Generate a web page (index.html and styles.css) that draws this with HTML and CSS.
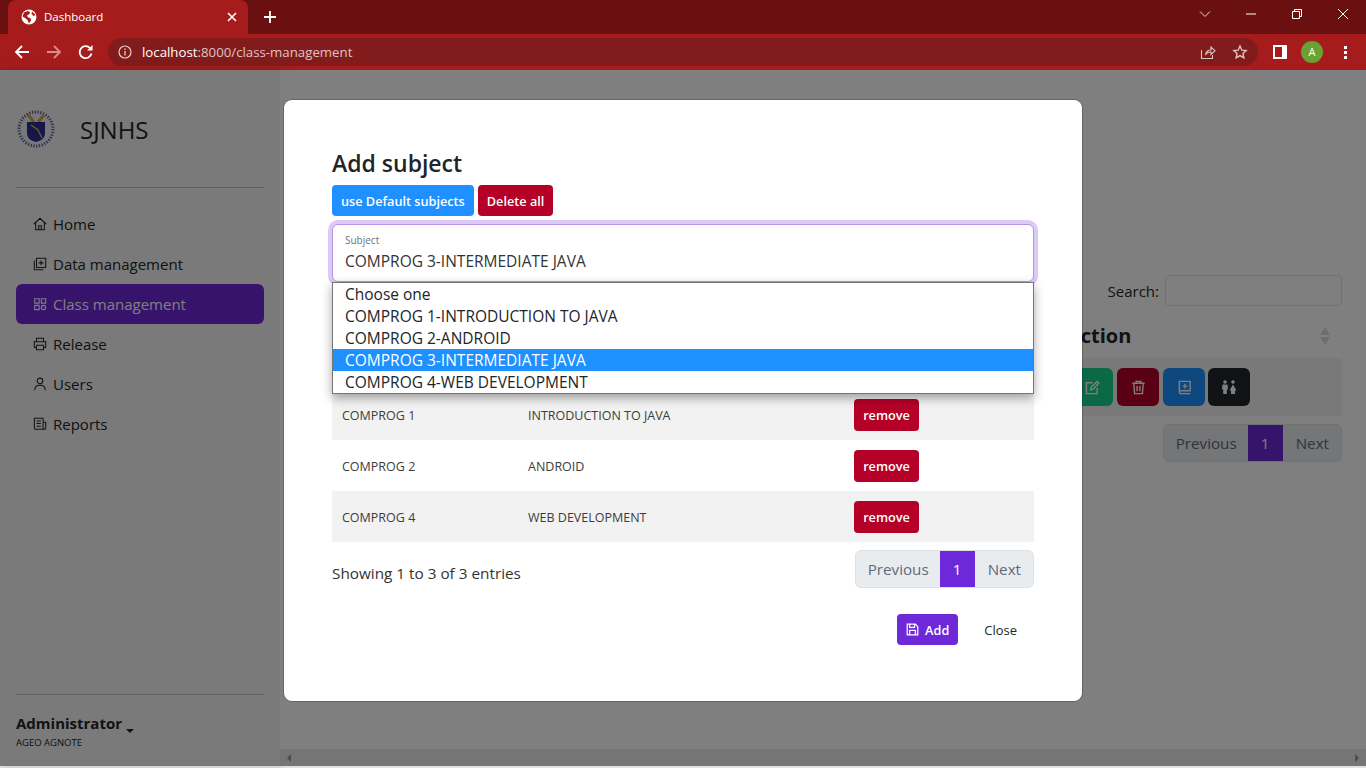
FILE: index.html
```html
<!DOCTYPE html>
<html lang="en">
<head>
    <meta charset="UTF-8">
    <meta name="viewport" content="width=device-width, initial-scale=1.0">
    <title>Dashboard</title>
    <link rel="stylesheet" href="styles.css">
</head>
<body>

    <!-- Browser chrome -->
    <div class="tabstrip">
        <div class="tab">
            <svg class="favicon" viewBox="0 0 16 16" width="16" height="16"><circle cx="8" cy="8" r="7.5" fill="#fff"/><path d="M3 3.5 6.5 2 9 3 8.5 5 6 6.5 7 8.5 9.5 9 10 11.500 8 14.500 6.500 11 4 9 1.500 7.500z M11 2.500 14.500 6 12.500 7 10.500 5z" fill="#a61c1c"/></svg>
            <span class="tab-title">Dashboard</span>
            <svg class="tab-close" viewBox="0 0 10 10" width="10" height="10"><path d="M1 1 9 9M9 1 1 9" stroke="#fff" stroke-width="1.600"/></svg>
        </div>
        <svg class="new-tab" viewBox="0 0 12 12" width="12" height="12"><path d="M6 0V12M0 6H12" stroke="#fff" stroke-width="1.800"/></svg>
        <div class="window-controls">
            <svg viewBox="0 0 12 12" width="12" height="12"><path d="M1 3.500 6 8.500 11 3.500" fill="none" stroke="#e6d3d3"/></svg>
            <svg viewBox="0 0 12 12" width="12" height="12"><path d="M1 6H11" stroke="#fff"/></svg>
            <svg viewBox="0 0 12 12" width="12" height="12"><path d="M1.500 3.500H8.500V10.500H1.500z M3.500 3.500V1.500H10.500V8.500H8.500" fill="none" stroke="#fff"/></svg>
            <svg viewBox="0 0 12 12" width="12" height="12"><path d="M1 1 11 11M11 1 1 11" stroke="#fff"/></svg>
        </div>
    </div>
    <div class="toolbar">
        <svg class="nav-btn" viewBox="0 0 16 16" width="16" height="16"><path d="M15 8H2M8 2 2 8 8 14" fill="none" stroke="#fff" stroke-width="1.800"/></svg>
        <svg class="nav-btn" viewBox="0 0 16 16" width="16" height="16"><path d="M1 8H14M8 2 14 8 8 14" fill="none" stroke="#d98a8a" stroke-width="1.800"/></svg>
        <svg class="nav-btn" viewBox="0 0 16 16" width="16" height="16"><path d="M13.500 9.500A6 6 0 1 1 12 4" fill="none" stroke="#fff" stroke-width="1.800"/><path d="M14.500 1V6.500H9z" fill="#fff"/></svg>
        <div class="omnibox">
            <svg viewBox="0 0 14 14" width="14" height="14"><circle cx="7" cy="7" r="6" fill="none" stroke="#e3cfcf" stroke-width="1.200"/><path d="M7 6V10.500M7 3.500V5" stroke="#e3cfcf" stroke-width="1.300"/></svg>
            <span class="url"><span class="url-host">localhost</span>:8000/class-management</span>
            <svg class="omni-share" viewBox="0 0 16 16" width="16" height="16"><path d="M1.500 6V14.500H12.500V11M5.500 11C6 7.500 8.500 6 11 6V3L15 6.700 11 10.500V8C8.500 8 6.500 9 5.500 11z" fill="none" stroke="#dcc4c4" stroke-width="1.100"/></svg>
            <svg class="omni-star" viewBox="0 0 16 16" width="16" height="16"><path d="M8 2 9.800 6.200 14.200 6.600 10.900 9.500 11.900 13.900 8 11.600 4.100 13.900 5.100 9.500 1.800 6.600 6.200 6.200z" fill="none" stroke="#e0c8c8" stroke-width="1.300"/></svg>
        </div>
        <div class="side-panel-btn"><span></span></div>
        <div class="avatar">A</div>
        <div class="menu-dots"><span></span><span></span><span></span></div>
    </div>

    <div class="page">
        <!-- Sidebar -->
        <div class="sidebar">
            <div class="brand">
                <svg class="emblem" viewBox="0 0 40 40" width="40" height="40">
                    <circle cx="20" cy="20" r="19" fill="#f0f0f4"/>
                    <circle cx="20" cy="20" r="17" fill="none" stroke="#5a5a9a" stroke-width="3" stroke-dasharray="1.200 1.600"/>
                    <path d="M12 6 18 13M28 6 22 13" stroke="#d4a93a" stroke-width="3"/>
                    <path d="M11 13H29V24C29 30 24 32 20 33 16 32 11 30 11 24z" fill="#2c2c96"/>
                    <path d="M15 16 22 21 26 29" fill="none" stroke="#d8c24a" stroke-width="1.300"/>
                </svg>
                <span class="brand-name">SJNHS</span>
            </div>
            <hr class="side-line">
            <ul class="side-nav">
                <li><svg viewBox="0 0 16 16" width="14" height="14"><path d="M1 8 8 1.500 15 8M3 6.500V14.500H13V6.500M6.500 14.500V10H9.500V14.500" fill="none" stroke="currentColor" stroke-width="1.200"/></svg>Home</li>
                <li><svg viewBox="0 0 16 16" width="14" height="14"><path d="M4 1.500H14.500V12H4zM1.500 4V14.500H12M9.200 4V9.500M6.500 6.700H12" fill="none" stroke="currentColor" stroke-width="1.200"/></svg>Data management</li>
                <li class="active"><svg viewBox="0 0 16 16" width="14" height="14"><path d="M2 2H7V7H2zM9.500 2H14.500V7H9.500zM2 9.500H7V14.500H2z" fill="none" stroke="currentColor" stroke-width="1.300"/><circle cx="12" cy="12" r="2.500" fill="none" stroke="currentColor" stroke-width="1.300"/></svg>Class management</li>
                <li><svg viewBox="0 0 16 16" width="14" height="14"><path d="M4 5V1.500H12V5M4 12H1.500V5.500H14.500V12H12M4 9.500H12V14.500H4z" fill="none" stroke="currentColor" stroke-width="1.200"/></svg>Release</li>
                <li><svg viewBox="0 0 16 16" width="14" height="14"><circle cx="8" cy="4.500" r="3.200" fill="none" stroke="currentColor" stroke-width="1.200"/><path d="M2 15C2 11 5 9.500 8 9.500S14 11 14 15" fill="none" stroke="currentColor" stroke-width="1.200"/></svg>Users</li>
                <li><svg viewBox="0 0 16 16" width="14" height="14"><path d="M1.500 1.500H11.500V14H3C2 14 1.500 13.500 1.500 12.500zM11.500 6H14.500V12.500C14.500 13.500 14 14 13 14H11.500M4 4.500H9M4 7.500H9M4 10.500H9" fill="none" stroke="currentColor" stroke-width="1.200"/></svg>Reports</li>
            </ul>
            <div class="side-user">
                <hr class="side-line">
                <div class="user-role">Administrator<span class="caret"></span></div>
                <div class="user-name">AGEO AGNOTE</div>
            </div>
        </div>

        <!-- Page behind the modal -->
        <div class="main">
            <div class="content">
                <div class="search-row">
                    <label for="search">Search:</label>
                    <input type="text" id="search">
                </div>
                <div class="list-head">
                    <span>Action</span>
                    <svg viewBox="0 0 12 20" width="12" height="20"><path d="M6 1 11 9H1zM6 19 1 11H11z" fill="#dcdcdc"/></svg>
                </div>
                <div class="list-row">
                    <div class="action-btns">
                        <button class="act act-green"><svg viewBox="0 0 16 16" width="15" height="15"><path d="M13 8.500V14.500H1.500V3H8M6 10.500 6.700 7.500 13 1.500 14.800 3.300 8.800 9.800z" fill="none" stroke="#fff" stroke-width="1.500"/></svg></button>
                        <button class="act act-red"><svg viewBox="0 0 16 16" width="15" height="15"><path d="M1.500 3.500H14.500M5.500 3.500V1.500H10.500V3.500M3 3.500 3.800 14.500H12.200L13 3.500M6.500 6V12M9.500 6V12" fill="none" stroke="#fff" stroke-width="1.500"/></svg></button>
                        <button class="act act-blue"><svg viewBox="0 0 16 16" width="15" height="15"><path d="M2.500 12.500V1.500H14V11.500H3.500C2.500 11.500 2.500 12 2.500 12.500S2.500 14.500 3.500 14.500H14M8.500 4V9M6 6.500H11" fill="none" stroke="#fff" stroke-width="1.500"/></svg></button>
                        <button class="act act-black"><svg viewBox="0 0 16 16" width="16" height="16"><circle cx="4" cy="3" r="1.800" fill="#fff"/><circle cx="12" cy="3" r="1.800" fill="#fff"/><path d="M1.500 5.500H6.500L7 10.500H5.800V15H2.200V10.500H1zM12 5.500 15.500 11.500H14V15H10V11.500H8.500z" fill="#fff"/></svg></button>
                    </div>
                </div>
                <div class="pager">
                    <a>Previous</a><a class="current">1</a><a>Next</a>
                </div>
            </div>
            <div class="h-scroll"><i class="arrow-left"></i><i class="arrow-right"></i></div>
        </div>

        <div class="backdrop"></div>

        <!-- Add subject modal -->
        <div class="modal">
            <h2 class="modal-title">Add subject</h2>
            <div class="modal-actions">
                <button class="btn btn-blue">use Default subjects</button>
                <button class="btn btn-crimson">Delete all</button>
            </div>
            <div class="select-wrap">
                <div class="select-box">
                    <span class="select-label">Subject</span>
                    <span class="select-value">COMPROG 3-INTERMEDIATE JAVA</span>
                </div>
                <ul class="select-list">
                    <li>Choose one</li>
                    <li>COMPROG 1-INTRODUCTION TO JAVA</li>
                    <li>COMPROG 2-ANDROID</li>
                    <li class="selected">COMPROG 3-INTERMEDIATE JAVA</li>
                    <li>COMPROG 4-WEB DEVELOPMENT</li>
                </ul>
            </div>
            <div class="subject-rows">
                <div class="subject-row">
                    <span class="cell">COMPROG 1</span><span class="cell">INTRODUCTION TO JAVA</span>
                    <span><button class="btn btn-crimson btn-remove">remove</button></span>
                </div>
                <div class="subject-row">
                    <span class="cell">COMPROG 2</span><span class="cell">ANDROID</span>
                    <span><button class="btn btn-crimson btn-remove">remove</button></span>
                </div>
                <div class="subject-row">
                    <span class="cell">COMPROG 4</span><span class="cell">WEB DEVELOPMENT</span>
                    <span><button class="btn btn-crimson btn-remove">remove</button></span>
                </div>
            </div>
            <div class="table-foot">
                <span class="entries">Showing 1 to 3 of 3 entries</span>
                <div class="pager">
                    <a>Previous</a><a class="current">1</a><a>Next</a>
                </div>
            </div>
            <div class="modal-foot">
                <button class="btn btn-purple"><svg viewBox="0 0 16 16" width="13" height="13"><path d="M1.500 1.500H11.500L14.500 4.500V14.500H1.500zM4.500 1.500V5.500H10.500V1.500M4.500 14.500V9H11.500V14.500" fill="none" stroke="#fff" stroke-width="1.500"/></svg>Add</button>
                <button class="btn btn-plain">Close</button>
            </div>
        </div>
    </div>
    <div class="bottom-strip"></div>

</body>
</html>
```

FILE: styles.css
```css
* {
    box-sizing: border-box;
}

html, body {
    margin: 0;
    height: 768px;
    overflow: hidden;
}

body {
    font-family: "Open Sans", "Noto Sans", sans-serif;
    color: #212529;
    background-color: #fff;
}

/* Browser chrome */
.tabstrip {
    display: flex;
    align-items: flex-end;
    height: 34px;
    padding-left: 8px;
    background-color: #6b1010;
}

.tab {
    display: flex;
    align-items: center;
    width: 240px;
    height: 34px;
    padding: 0 11px 0 13px;
    border-radius: 8px 8px 0 0;
    background-color: #a61c1c;
}

.tab-title {
    flex: 1;
    margin-left: 7px;
    padding-bottom: 2px;
    font-size: 11.500px;
    color: #fff;
}

.new-tab {
    margin: 0 0 11px 16px;
}

.window-controls {
    display: flex;
    gap: 34px;
    margin-left: auto;
    padding: 0 17px 14px 0;
}

.toolbar {
    display: flex;
    align-items: center;
    height: 36px;
    padding-left: 14px;
    background-color: #a61c1c;
}

.nav-btn {
    margin-right: 16px;
}

.omnibox {
    display: flex;
    align-items: center;
    width: 1150px;
    height: 28px;
    margin-left: -2px;
    padding: 0 10px;
    border-radius: 14px;
    background-color: #821c1c;
}

.url {
    flex: 1;
    margin-left: 10px;
    font-size: 13.250px;
    color: #dcc4c4;
}

.url-host {
    color: #fff;
}

.omni-share {
    margin-right: 16px;
}

.side-panel-btn {
    width: 14px;
    height: 14px;
    margin-left: 15px;
    padding: 2px 5px 2px 2px;
    background-color: #fff;
}

.side-panel-btn span {
    display: block;
    height: 100%;
    background-color: #a61c1c;
}

.avatar {
    width: 22px;
    height: 22px;
    margin-left: 14px;
    border-radius: 50%;
    font-size: 11px;
    line-height: 22px;
    text-align: center;
    color: #fff;
    background-color: #6aa135;
}

.menu-dots {
    display: flex;
    flex-direction: column;
    gap: 2px;
    margin-left: 21px;
}

.menu-dots span {
    width: 3px;
    height: 3px;
    background-color: #fff;
}

/* Page */
.page {
    position: relative;
    display: flex;
    height: 696px;
}

.sidebar {
    display: flex;
    flex-direction: column;
    width: 280px;
    padding: 0 16px;
    background-color: #f5f5f5;
    box-shadow: 2px 0 10px rgba(0, 0, 0, .15);
}

.brand {
    display: flex;
    align-items: center;
    height: 117px;
    padding-top: 1px;
}

.brand-name {
    margin-left: 24px;
    font-size: 24px;
}

.side-line {
    width: 100%;
    margin: 0;
    border: 0;
    border-top: 1px solid #c0c0c0;
}

.side-nav {
    margin: 16px 0 0;
    padding: 0;
    list-style: none;
}

.side-nav li {
    display: flex;
    align-items: center;
    gap: 6px;
    height: 40px;
    padding-left: 17px;
    border-radius: 6px;
    font-size: 15px;
}

.side-nav li.active {
    color: #fff;
    background-color: #6f26d9;
}

.side-user {
    margin-top: auto;
    padding-bottom: 17px;
}

.user-role {
    margin-top: 18px;
    font-size: 15px;
    font-weight: 700;
}

.caret {
    display: inline-block;
    margin-left: 4px;
    vertical-align: -4px;
    border: 4px solid transparent;
    border-top-color: #212529;
    border-bottom: 0;
}

.user-name {
    margin-top: 3px;
    font-size: 9.500px;
}

.main {
    position: relative;
    flex: 1;
    background-color: #fff;
}

.content {
    display: flex;
    flex-direction: column;
    align-items: flex-end;
    padding: 205px 24px 0;
}

.search-row {
    display: flex;
    align-items: center;
    gap: 6px;
    font-size: 15px;
}

.search-row input {
    width: 177px;
    height: 31px;
    border: 1px solid #dee2e6;
    border-radius: 4px;
    background-color: #fff;
}

.list-head {
    display: flex;
    justify-content: space-between;
    align-items: center;
    width: 280px;
    height: 52px;
    padding: 7px 11px 0 5px;
    font-size: 20px;
    font-weight: 700;
}

.list-row {
    width: 280px;
    height: 58px;
    padding: 10px 0 0 9px;
    background-color: #f2f2f2;
}

.action-btns {
    display: flex;
    gap: 4px;
}

.act {
    display: flex;
    align-items: center;
    justify-content: center;
    width: 42px;
    height: 38px;
    padding: 0;
    border: 0;
    border-radius: 6px;
}

.act-green { background-color: #17d28a; }
.act-red { background-color: #b50028; }
.act-blue { background-color: #1e90ff; }
.act-black { margin-left: -1px; background-color: #212529; }

.content .pager {
    margin-top: 8px;
}

.pager {
    display: flex;
    height: 38px;
    border: 1px solid #dee2e6;
    border-radius: 6px;
    overflow: hidden;
    font-size: 15.200px;
    line-height: 36px;
    color: #5f6b7a;
    background-color: #e9ecef;
}

.pager a {
    padding: 0 12px 0 13px;
}

.pager a:first-child {
    padding: 0 11px 0 12px;
}

.pager a.current {
    width: 35px;
    margin: -1px 0;
    padding: 0;
    line-height: 38px;
    text-align: center;
    color: #fff;
    background-color: #6d28d9;
}

.h-scroll {
    position: absolute;
    left: 0;
    right: 0;
    bottom: 0;
    display: flex;
    justify-content: space-between;
    align-items: center;
    height: 17px;
    padding: 0 7px;
    background-color: #ebebeb;
}

.arrow-left {
    border: 4px solid transparent;
    border-right-color: #999;
    border-left: 0;
}

.arrow-right {
    border: 4px solid transparent;
    border-left-color: #999;
    border-right: 0;
}

.backdrop {
    position: absolute;
    top: 0;
    left: 0;
    right: 0;
    bottom: 0;
    background-color: rgba(0, 0, 0, .5);
}

/* Modal */
.modal {
    position: absolute;
    top: 30px;
    left: 284px;
    width: 798px;
    height: 601px;
    padding: 47px 48px 48px;
    border-radius: 8px;
    background-color: #fff;
    box-shadow: 0 0 0 1px rgba(0, 0, 0, .2);
}

.modal-title {
    margin: 0;
    height: 38px;
    font-size: 23px;
    font-weight: 600;
    line-height: 33px;
}

.modal-actions {
    display: flex;
    gap: 4px;
}

.btn {
    height: 31px;
    padding: 0 9px;
    border: 0;
    border-radius: 4px;
    font-family: inherit;
    font-size: 12.700px;
    font-weight: 600;
    color: #fff;
}

.btn-blue { background-color: #1e90ff; }
.btn-crimson { background-color: #b50028; }
.btn-purple { background-color: #6d28d9; }

.btn-plain {
    font-size: 13px;
    font-weight: 400;
    color: #212529;
    background-color: transparent;
}

.select-wrap {
    position: relative;
    margin-top: 8px;
}

.select-box {
    display: flex;
    flex-direction: column;
    height: 58px;
    padding: 8px 12px 0;
    border: 1px solid #b794ea;
    border-radius: 6px;
    box-shadow: 0 0 0 4px #dcc9f6;
    background-color: #fff;
}

.select-label {
    font-size: 10px;
    line-height: 14px;
    color: #6c757d;
}

.select-value {
    margin-top: 3px;
    font-size: 15.500px;
    line-height: 22px;
    color: #333;
}

.select-list {
    position: absolute;
    top: 58px;
    left: 0;
    right: 0;
    z-index: 2;
    margin: 0;
    padding: 0;
    border: 1px solid #767676;
    list-style: none;
    background-color: #fff;
    box-shadow: 0 4px 10px rgba(0, 0, 0, .35);
}

.select-list li {
    height: 22px;
    padding-left: 12px;
    font-size: 15.500px;
    line-height: 22px;
}

.select-list li.selected {
    color: #fff;
    background-color: #1e90ff;
}

.subject-rows {
    margin-top: 107px;
}

.subject-row {
    display: grid;
    grid-template-columns: 186px 326px 1fr;
    align-items: center;
    height: 51px;
    padding-left: 10px;
    font-size: 12.500px;
    color: #3c3c3c;
}

.subject-row .cell {
    padding-top: 2px;
}

.subject-row:nth-child(odd) {
    background-color: #f2f2f2;
}

.btn-remove {
    width: 65px;
    height: 32px;
    padding: 0;
}

.table-foot {
    display: flex;
    justify-content: space-between;
    align-items: center;
    margin-top: 8px;
}

.entries {
    margin-top: 8px;
    font-size: 15.300px;
    color: #333;
}

.modal-foot {
    display: flex;
    justify-content: flex-end;
    gap: 17px;
    margin-top: 26px;
    padding-right: 8px;
}

.btn-purple svg {
    margin-right: 6px;
    vertical-align: -1px;
}

.btn-purple {
    width: 61px;
    padding: 0;
}

.bottom-strip {
    height: 2px;
    background-color: #e2e2e2;
}
```
